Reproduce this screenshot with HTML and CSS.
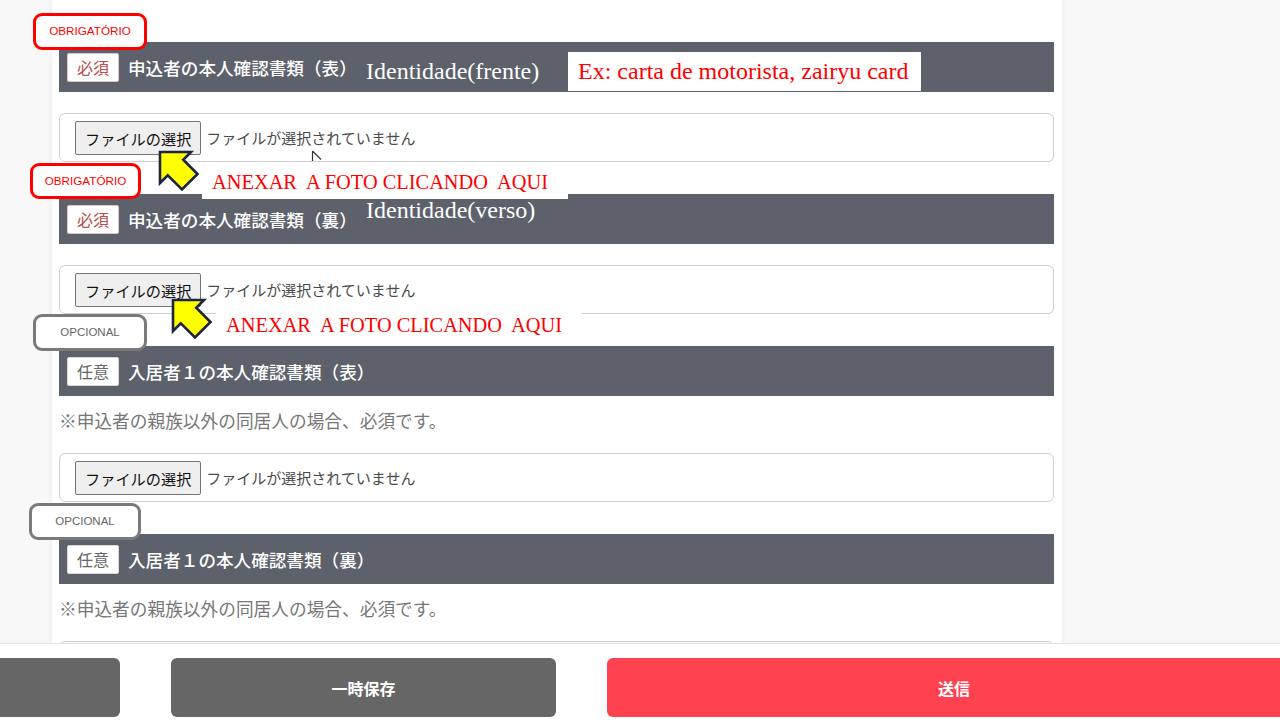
FILE: index.html
```html
<!DOCTYPE html>
<html lang="ja">
<head>
<meta charset="utf-8">
<title>本人確認書類</title>
<link rel="stylesheet" href="styles.css">
</head>
<body>
<div class="page">
  <main class="card">
    <section class="field">
      <div class="field-head"><span class="badge badge-req">必須</span><h2 class="field-title">申込者の本人確認書類（表）</h2></div>
      <div class="file-box"><button class="file-btn" type="button">ファイルの選択</button><span class="file-status">ファイルが選択されていません</span></div>
    </section>
    <section class="field">
      <div class="field-head"><span class="badge badge-req">必須</span><h2 class="field-title">申込者の本人確認書類（裏）</h2></div>
      <div class="file-box"><button class="file-btn" type="button">ファイルの選択</button><span class="file-status">ファイルが選択されていません</span></div>
    </section>
    <section class="field">
      <div class="field-head"><span class="badge badge-opt">任意</span><h2 class="field-title">入居者１の本人確認書類（表）</h2></div>
      <p class="note">※申込者の親族以外の同居人の場合、必須です。</p>
      <div class="file-box"><button class="file-btn" type="button">ファイルの選択</button><span class="file-status">ファイルが選択されていません</span></div>
    </section>
    <section class="field">
      <div class="field-head"><span class="badge badge-opt">任意</span><h2 class="field-title">入居者１の本人確認書類（裏）</h2></div>
      <p class="note">※申込者の親族以外の同居人の場合、必須です。</p>
      <div class="file-box"><button class="file-btn" type="button">ファイルの選択</button><span class="file-status">ファイルが選択されていません</span></div>
    </section>
  </main>
</div>

<div class="tag tag-req tag-r1">OBRIGATÓRIO</div>
<div class="tag tag-req tag-r2">OBRIGATÓRIO</div>
<div class="tag tag-opt tag-o1">OPCIONAL</div>
<div class="tag tag-opt tag-o2">OPCIONAL</div>

<span class="caption cap-frente">Identidade(frente)</span>
<span class="caption cap-verso">Identidade(verso)</span>
<span class="hint hint-ex">Ex: carta de motorista, zairyu card</span>
<span class="hint hint-a1">ANEXAR  A FOTO CLICANDO  AQUI</span>
<span class="hint hint-a2">ANEXAR  A FOTO CLICANDO  AQUI</span>

<svg class="arrow arrow-1" width="44" height="44" viewBox="0 0 44 44"><polygon points="2,2 33,2 25.25,9.75 39.5,24 24,39.5 9.75,25.25 2,33" fill="#ffff00" stroke="#1d2440" stroke-width="2.6" stroke-linejoin="miter"/></svg>
<svg class="arrow arrow-2" width="44" height="44" viewBox="0 0 44 44"><polygon points="2,2 33,2 25.25,9.75 39.5,24 24,39.5 9.75,25.25 2,33" fill="#ffff00" stroke="#1d2440" stroke-width="2.6" stroke-linejoin="miter"/></svg>
<svg class="cursor" width="14" height="14" viewBox="0 0 14 14"><path d="M1.5 1 V11 M1.5 1 L10 9.5" fill="none" stroke="#333" stroke-width="1.2"/></svg>

<footer class="footer">
  <div class="footer-row">
    <button class="foot-btn foot-gray foot-back" type="button"></button>
    <button class="foot-btn foot-gray foot-save" type="button">一時保存</button>
    <button class="foot-btn foot-red foot-send" type="button">送信</button>
  </div>
</footer>
</body>
</html>
```
FILE: styles.css
```css
* { box-sizing: border-box; }
html, body { margin: 0; padding: 0; }
body {
  background: #f8f8f8;
  font-family: "Noto Sans CJK JP", "Noto Sans", sans-serif;
  width: 1280px;
  height: 720px;
  overflow: hidden;
  position: relative;
}
.page { display: flex; }
.card {
  margin-left: 52px;
  width: 1010px;
  background: #fff;
  padding: 42px 8px 40px 7px;
  box-shadow: 0 0 6px rgba(0,0,0,0.06);
  min-height: 760px;
}
.field { margin-bottom: 32px; }
.field-head {
  height: 50px;
  background: #5c616b;
  display: flex;
  align-items: center;
  padding-left: 8px;
}
.badge {
  display: inline-block;
  height: 29px;
  line-height: 27px;
  padding: 0 9px;
  font-size: 16px;
  background: #fff;
  border: 1px solid #d8d8d8;
  border-radius: 2px;
}
.badge-req { color: #b4504e; border-color: #e2c4c4; }
.badge-opt { color: #666; }
.field-title {
  margin: 0 0 0 9px;
  font-size: 17.6px;
  font-weight: 500;
  color: #fff;
  letter-spacing: 0;
}
.file-box {
  margin-top: 21px;
  height: 49px;
  border: 1px solid #cfcfcf;
  border-radius: 6px;
  display: flex;
  align-items: center;
  padding: 0 15px;
}
.note + .file-box { margin-top: 19px; }
.file-btn {
  height: 34px;
  padding: 0 9px;
  font-family: "Noto Sans CJK JP", sans-serif;
  font-size: 15.2px;
  color: #111;
  background: #efefef;
  border: 1px solid #767676;
  border-radius: 2px;
}
.file-status {
  margin-left: 5px;
  font-size: 15px;
  color: #4a4a4a;
}
.note {
  margin: 10px 0 0;
  font-size: 17.7px;
  line-height: 28px;
  color: #777;
}

/* annotations overlay */
.tag {
  position: absolute;
  display: flex;
  align-items: center;
  justify-content: center;
  padding-bottom: 2px;
  background: #fff;
  border-radius: 9px;
  font-family: "Liberation Sans", Arial, sans-serif;
  font-size: 11.7px;
}
.tag-req { border: 3px solid #ff0000; color: #ff0000; }
.tag-opt { border: 3px solid #7a7a7a; color: #666; font-size: 11.5px; }
.tag-r1 { left: 33px; top: 13px; width: 114px; height: 37px; }
.tag-r2 { left: 30px; top: 163px; width: 111px; height: 36px; }
.tag-o1 { left: 33px; top: 314px; width: 114px; height: 37px; }
.tag-o2 { left: 29px; top: 503px; width: 112px; height: 37px; }

.caption {
  position: absolute;
  font-family: "Liberation Serif", "Times New Roman", serif;
  font-size: 24px;
  line-height: 24px;
  color: #fff;
  white-space: nowrap;
}
.cap-frente { left: 366px; top: 59px; }
.cap-verso { left: 366px; top: 198px; }

.hint {
  position: absolute;
  background: #fff;
  color: #ff0000;
  font-family: "Liberation Serif", "Times New Roman", serif;
  white-space: pre;
}
.hint-ex { left: 568px; top: 52px; width: 353px; height: 39px; line-height: 39px; font-size: 24px; padding-left: 10px; }
.hint-a1 { left: 202px; top: 166px; width: 366px; height: 33px; line-height: 33px; font-size: 20.4px; padding-left: 10px; }
.hint-a2 { left: 216px; top: 311px; width: 366px; height: 29px; line-height: 29px; font-size: 20.4px; padding-left: 10px; }

.arrow { position: absolute; }
.arrow-1 { left: 158px; top: 150px; }
.arrow-2 { left: 171px; top: 298px; }
.cursor { position: absolute; left: 311px; top: 150px; }

.footer {
  position: fixed;
  left: 0;
  right: 0;
  bottom: 0;
  height: 77px;
  background: #fff;
  border-top: 1px solid #e2e2e2;
  overflow: hidden;
}
.footer-row {
  display: flex;
  gap: 51px;
  padding-top: 14px;
  margin-left: -265px;
  width: 1600px;
}
.foot-btn {
  flex: none;
  height: 59px;
  border: none;
  border-radius: 6px;
  color: #fff;
  font-family: "Noto Sans CJK JP", sans-serif;
  font-size: 16px;
  font-weight: 700;
}
.foot-gray { background: #666666; }
.foot-red { background: #ff4250; }
.foot-back, .foot-save { width: 385px; }
.foot-send { width: 694px; }
```
